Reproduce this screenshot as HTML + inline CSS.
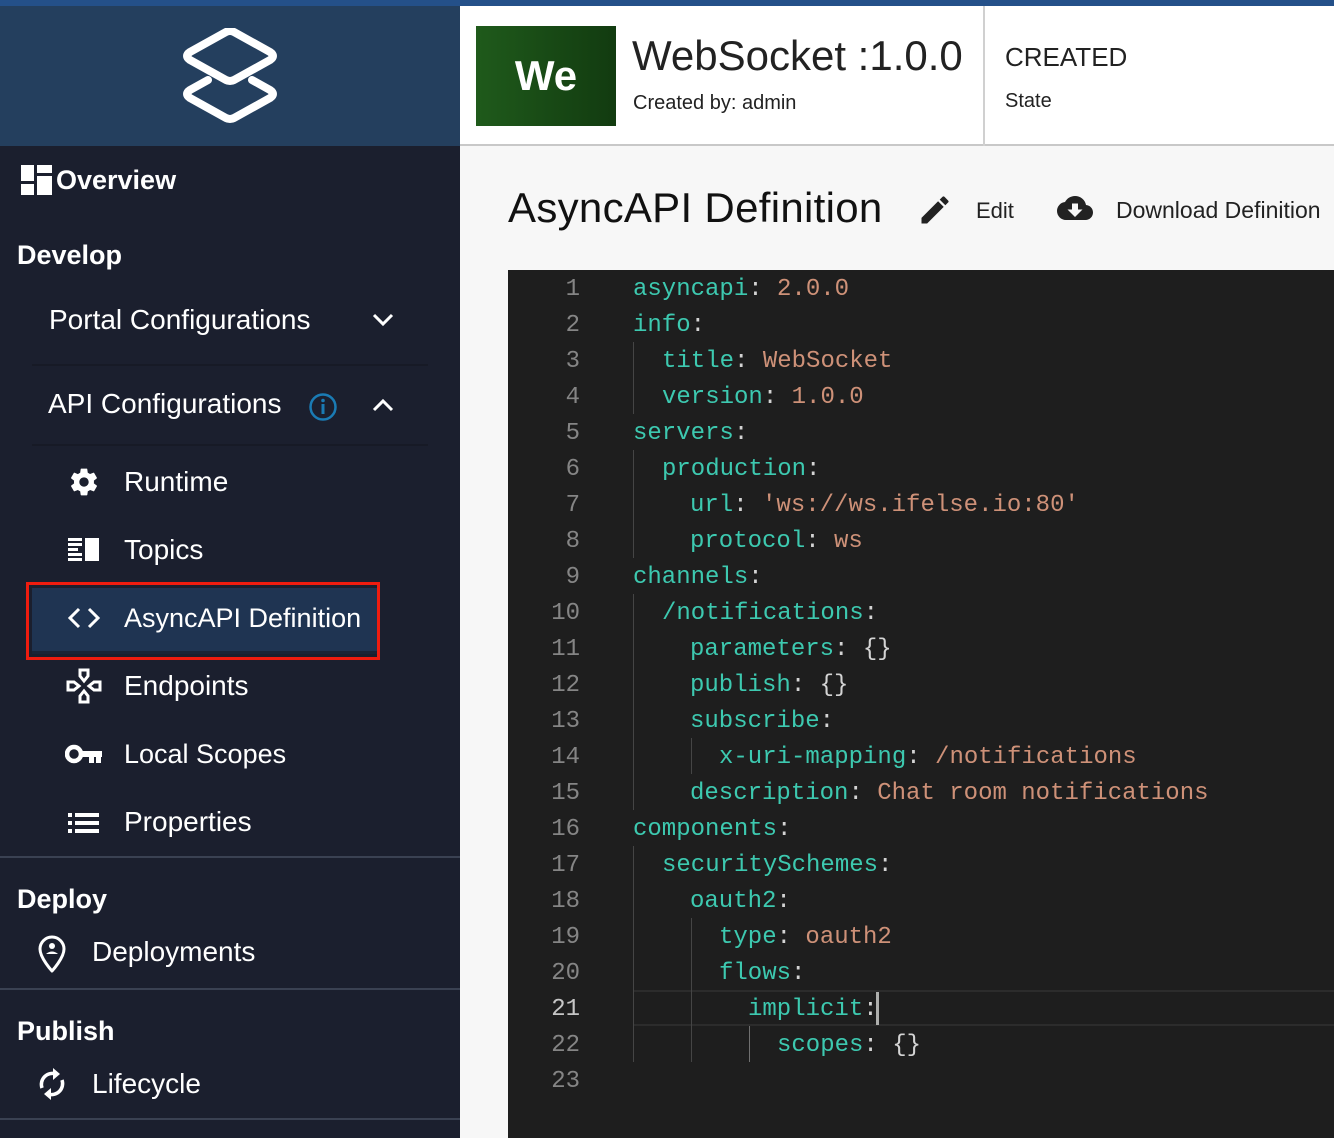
<!DOCTYPE html>
<html><head><meta charset="utf-8"><style>
*{margin:0;padding:0;box-sizing:border-box}
body{width:1334px;height:1138px;overflow:hidden;background:#f7f7f7;font-family:"Liberation Sans","DejaVu Sans",sans-serif;position:relative}
.abs{position:absolute}
#side{left:0;top:0;width:460px;height:1138px;background:#1b1f2e}
#topband{left:0;top:0;width:1334px;height:6px;background:#245089}
#logo{left:0;top:6px;width:460px;height:140px;background:#243f5e}
.w{color:#fff;white-space:nowrap}
.b{font-weight:bold}
.sep{height:2px;background:#3a4152}
#hdr{left:460px;top:6px;width:874px;height:140px;background:#fff;border-bottom:2px solid #c8c8c8}
#code{left:508px;top:270px;width:826px;height:868px;background:#1e1e1e;font-family:"Liberation Mono","DejaVu Sans Mono",monospace;font-size:24px}
.ln{position:absolute;left:0;width:72px;text-align:right;color:#858585;height:36px;line-height:40px}
.cl{position:absolute;height:36px;line-height:40px;white-space:pre;color:#d4d4d4}
.k{color:#3dc9b0}.v{color:#ce9178}
.g{position:absolute;width:1px;height:36px;background:#454545}
</style></head><body>
<div id="side" class="abs"></div>
<div id="logo" class="abs">
<svg class="abs" style="left:182px;top:22px" width="96" height="96" viewBox="0 0 96 96">
<path d="M44 4 L8 24 Q2 28 8 32 L44 52 Q48 54 52 52 L88 32 Q94 28 88 24 L52 4 Q48 2 44 4Z" fill="none" stroke="#fff" stroke-width="8" stroke-linejoin="round"/>
<path d="M26 56 L8 66 Q2 70 8 74 L44 94 Q48 96 52 94 L88 74 Q94 70 88 66 L70 56" fill="none" stroke="#fff" stroke-width="8" stroke-linejoin="round" stroke-linecap="round" transform="translate(0,-4)"/>
</svg></div>
<div id="topband" class="abs"></div>

<svg class="abs" style="left:21px;top:165px" width="31" height="30"><rect x="0" y="0" width="13" height="16" fill="#fff"/><rect x="0" y="19" width="13" height="11" fill="#fff"/><rect x="16" y="0" width="15" height="8" fill="#fff"/><rect x="16" y="11" width="15" height="19" fill="#fff"/></svg>
<div class="abs w b" style="left:56px;top:165px;font-size:27px">Overview</div>
<div class="abs w b" style="left:17px;top:240px;font-size:27px">Develop</div>
<div class="abs w" style="left:49px;top:304px;font-size:28px">Portal Configurations</div>
<svg class="abs" style="left:372px;top:312px" width="22" height="16"><path d="M2 3 L11 12 L20 3" fill="none" stroke="#fff" stroke-width="3"/></svg>
<div class="abs" style="left:32px;top:364px;width:396px;height:2px;background:#171a26"></div>
<div class="abs w" style="left:48px;top:388px;font-size:28px">API Configurations</div>
<svg class="abs" style="left:308px;top:392px" width="30" height="30"><circle cx="15" cy="15" r="12.5" fill="none" stroke="#1a7bb4" stroke-width="2.5"/><rect x="13.5" y="12" width="3" height="10" fill="#1a7bb4"/><circle cx="15" cy="8.5" r="1.8" fill="#1a7bb4"/></svg>
<svg class="abs" style="left:372px;top:397px" width="22" height="16"><path d="M2 13 L11 4 L20 13" fill="none" stroke="#fff" stroke-width="3"/></svg>
<div class="abs" style="left:32px;top:444px;width:396px;height:2px;background:#171a26"></div>

<svg class="abs" style="left:68px;top:466px" width="32" height="32" viewBox="0 0 24 24"><path fill="#fff" d="M19.4 13c.04-.33.06-.66.06-1s-.02-.67-.06-1l2.1-1.65c.2-.15.25-.42.12-.64l-2-3.46c-.12-.22-.39-.3-.61-.22l-2.49 1c-.52-.4-1.08-.73-1.690-.98l-.38-2.650C14.46 2.18 14.25 2 14 2h-4c-.25 0-.46.18-.49.42l-.38 2.65c-.61.25-1.17.59-1.69.98l-2.49-1c-.23-.09-.49 0-.61.22l-2 3.46c-.13.22-.07.49.12.64L4.57 11c-.04.33-.07.67-.07 1s.03.67.07 1l-2.11 1.65c-.19.15-.24.42-.12.64l2 3.46c.12.22.39.3.61.22l2.49-1c.52.4 1.08.73 1.69.98l.38 2.65c.03.24.24.42.49.42h4c.25 0 .46-.18.49-.42l.38-2.65c.61-.25 1.17-.59 1.69-.98l2.49 1c.23.09.49 0 .61-.22l2-3.46c.12-.22.07-.49-.12-.64L19.4 13zM12 15.5c-1.93 0-3.5-1.57-3.5-3.5s1.57-3.5 3.5-3.5 3.5 1.57 3.5 3.5-1.57 3.5-3.5 3.5z"/></svg>
<div class="abs w" style="left:124px;top:466px;font-size:28px">Runtime</div>
<svg class="abs" style="left:68px;top:538px" width="32" height="24"><g fill="#fff"><rect x="0" y="0" width="14" height="3"/><rect x="0" y="5" width="14" height="3"/><rect x="0" y="10" width="10" height="3"/><rect x="0" y="15" width="14" height="3"/><rect x="0" y="20" width="14" height="3"/><rect x="17" y="0" width="14" height="23"/></g></svg>
<div class="abs w" style="left:124px;top:534px;font-size:28px">Topics</div>

<div class="abs" style="left:26px;top:582px;width:354px;height:78px;border:3px solid #ef1c0f;"></div>
<div class="abs" style="left:32px;top:588px;width:345px;height:66px;background:#1f3452;border-bottom:3px solid #1b2436"></div>
<svg class="abs" style="left:66px;top:606px" width="36" height="24"><path d="M13 3 L4 12 L13 21 M23 3 L32 12 L23 21" fill="none" stroke="#fff" stroke-width="3"/></svg>
<div class="abs w" style="left:124px;top:603px;font-size:27px">AsyncAPI Definition</div>

<svg class="abs" style="left:66px;top:668px" width="36" height="36"><g fill="none" stroke="#fff" stroke-width="3"><path d="M14 2 h8 v6 l-4 5 l-4 -5z"/><path d="M14 34 h8 v-6 l-4 -5 l-4 5z"/><path d="M2 14 v8 h6 l5 -4 l-5 -4z"/><path d="M34 14 v8 h-6 l-5 -4 l5 -4z"/></g></svg>
<div class="abs w" style="left:124px;top:670px;font-size:28px">Endpoints</div>
<svg class="abs" style="left:65px;top:742px" width="38" height="24"><circle cx="9" cy="12" r="7" fill="none" stroke="#fff" stroke-width="4.5"/><rect x="15" y="9" width="22" height="6" fill="#fff"/><rect x="24" y="9" width="5" height="12" fill="#fff"/><rect x="31" y="9" width="5" height="12" fill="#fff"/></svg>
<div class="abs w" style="left:124px;top:739px;font-size:27px">Local Scopes</div>
<svg class="abs" style="left:68px;top:812px" width="32" height="22"><g fill="#fff"><rect x="0" y="1" width="4" height="4"/><rect x="0" y="9" width="4" height="4"/><rect x="0" y="17" width="4" height="4"/><rect x="7" y="1" width="24" height="4"/><rect x="7" y="9" width="24" height="4"/><rect x="7" y="17" width="24" height="4"/></g></svg>
<div class="abs w" style="left:124px;top:806px;font-size:28px">Properties</div>

<div class="abs sep" style="left:0;top:856px;width:460px"></div>
<div class="abs w b" style="left:17px;top:884px;font-size:27px">Deploy</div>
<svg class="abs" style="left:36px;top:934px" width="32" height="40"><path d="M16 37 C16 37 4 24 4 15 A12 12 0 0 1 28 15 C28 24 16 37 16 37Z" fill="none" stroke="#fff" stroke-width="3" stroke-linejoin="round"/><circle cx="16" cy="12" r="3" fill="#fff"/><path d="M10 20 Q16 15 22 20z" fill="#fff"/></svg>
<div class="abs w" style="left:92px;top:936px;font-size:28px">Deployments</div>
<div class="abs sep" style="left:0;top:988px;width:460px"></div>
<div class="abs w b" style="left:17px;top:1016px;font-size:27px">Publish</div>
<svg class="abs" style="left:36px;top:1066px" width="32" height="36" viewBox="0 0 32 36"><g fill="none" stroke="#fff" stroke-width="3.5"><path d="M6 22 A11 11 0 0 1 20 8"/><path d="M26 14 A11 11 0 0 1 12 28"/></g><path d="M17 2 L24 8 L17 14z" fill="#fff"/><path d="M15 22 L8 28 L15 34z" fill="#fff"/></svg>
<div class="abs w" style="left:92px;top:1068px;font-size:28px">Lifecycle</div>
<div class="abs sep" style="left:0;top:1118px;width:460px"></div>

<div id="hdr" class="abs"></div>
<div class="abs" style="left:476px;top:26px;width:140px;height:100px;background:linear-gradient(90deg,#1f5a1b,#123b10)"></div>
<div class="abs" style="left:476px;top:52px;width:140px;text-align:center;color:#fff;font-size:42px;font-weight:bold">We</div>
<div class="abs" style="left:632px;top:32px;font-size:42px;color:#222;white-space:nowrap">WebSocket :1.0.0</div>
<div class="abs" style="left:633px;top:92px;font-size:20px;color:#222;white-space:nowrap">Created by: admin</div>
<div class="abs" style="left:983px;top:6px;width:2px;height:140px;background:#d0d0d0"></div>
<div class="abs" style="left:1005px;top:42px;font-size:26px;color:#222">CREATED</div>
<div class="abs" style="left:1005px;top:90px;font-size:20px;color:#222">State</div>

<div class="abs" style="left:508px;top:184px;font-size:42px;color:#111;white-space:nowrap;letter-spacing:0.3px">AsyncAPI Definition</div>
<svg class="abs" style="left:916px;top:192px" width="38" height="36" viewBox="0 0 24 24"><path fill="#222" d="M3 17.25V21h3.75L17.81 9.94l-3.75-3.75L3 17.25zM20.71 7.04a1 1 0 0 0 0-1.41l-2.34-2.34a1 1 0 0 0-1.41 0l-1.83 1.83 3.75 3.75 1.83-1.83z"/></svg>
<div class="abs" style="left:976px;top:198px;font-size:22px;color:#222">Edit</div>
<svg class="abs" style="left:1052px;top:190px" width="46" height="36" viewBox="0 0 24 24"><path fill="#222" d="M19.35 10.04A7.49 7.49 0 0 0 12 4C9.11 4 6.6 5.64 5.35 8.04A5.994 5.994 0 0 0 0 14c0 3.31 2.69 6 6 6h13c2.76 0 5-2.24 5-5 0-2.64-2.05-4.78-4.65-4.96zM17 13l-5 5-5-5h3V9h4v4h3z"/></svg>
<div class="abs" style="left:1116px;top:197px;font-size:23px;color:#222;white-space:nowrap">Download Definition</div>

<div id="code" class="abs">
<div class="abs" style="left:126px;top:720px;width:700px;height:36px;border-top:2px solid #2c2c2c;border-bottom:2px solid #2c2c2c"></div>
<div class="ln" style="top:0">1</div><div class="ln" style="top:36px">2</div><div class="ln" style="top:72px">3</div><div class="ln" style="top:108px">4</div><div class="ln" style="top:144px">5</div><div class="ln" style="top:180px">6</div><div class="ln" style="top:216px">7</div><div class="ln" style="top:252px">8</div><div class="ln" style="top:288px">9</div><div class="ln" style="top:324px">10</div><div class="ln" style="top:360px">11</div><div class="ln" style="top:396px">12</div><div class="ln" style="top:432px">13</div><div class="ln" style="top:468px">14</div><div class="ln" style="top:504px">15</div><div class="ln" style="top:540px">16</div><div class="ln" style="top:576px">17</div><div class="ln" style="top:612px">18</div><div class="ln" style="top:648px">19</div><div class="ln" style="top:684px">20</div><div class="ln" style="top:720px;color:#c6c6c6">21</div><div class="ln" style="top:756px">22</div><div class="ln" style="top:792px">23</div>

<div class="g" style="left:125px;top:72px"></div><div class="g" style="left:125px;top:108px"></div>
<div class="g" style="left:125px;top:180px"></div><div class="g" style="left:125px;top:216px"></div><div class="g" style="left:125px;top:252px"></div>
<div class="g" style="left:125px;top:324px;height:216px"></div>
<div class="g" style="left:183px;top:468px"></div>
<div class="g" style="left:125px;top:576px;height:216px"></div>
<div class="g" style="left:183px;top:648px;height:144px"></div>
<div class="g" style="left:241px;top:756px;background:#707070"></div>

<div class="cl" style="left:125px;top:0"><span class="k">asyncapi</span>: <span class="v">2.0.0</span></div>
<div class="cl" style="left:125px;top:36px"><span class="k">info</span>:</div>
<div class="cl" style="left:154px;top:72px"><span class="k">title</span>: <span class="v">WebSocket</span></div>
<div class="cl" style="left:154px;top:108px"><span class="k">version</span>: <span class="v">1.0.0</span></div>
<div class="cl" style="left:125px;top:144px"><span class="k">servers</span>:</div>
<div class="cl" style="left:154px;top:180px"><span class="k">production</span>:</div>
<div class="cl" style="left:182px;top:216px"><span class="k">url</span>: <span class="v">'ws://ws.ifelse.io:80'</span></div>
<div class="cl" style="left:182px;top:252px"><span class="k">protocol</span>: <span class="v">ws</span></div>
<div class="cl" style="left:125px;top:288px"><span class="k">channels</span>:</div>
<div class="cl" style="left:154px;top:324px"><span class="k">/notifications</span>:</div>
<div class="cl" style="left:182px;top:360px"><span class="k">parameters</span>: {}</div>
<div class="cl" style="left:182px;top:396px"><span class="k">publish</span>: {}</div>
<div class="cl" style="left:182px;top:432px"><span class="k">subscribe</span>:</div>
<div class="cl" style="left:211px;top:468px"><span class="k">x-uri-mapping</span>: <span class="v">/notifications</span></div>
<div class="cl" style="left:182px;top:504px"><span class="k">description</span>: <span class="v">Chat room notifications</span></div>
<div class="cl" style="left:125px;top:540px"><span class="k">components</span>:</div>
<div class="cl" style="left:154px;top:576px"><span class="k">securitySchemes</span>:</div>
<div class="cl" style="left:182px;top:612px"><span class="k">oauth2</span>:</div>
<div class="cl" style="left:211px;top:648px"><span class="k">type</span>: <span class="v">oauth2</span></div>
<div class="cl" style="left:211px;top:684px"><span class="k">flows</span>:</div>
<div class="cl" style="left:240px;top:720px"><span class="k">implicit</span>:</div>
<div class="abs" style="left:368px;top:722px;width:3px;height:33px;background:#aeafad"></div>
<div class="cl" style="left:269px;top:756px"><span class="k">scopes</span>: {}</div>
</div>
</body></html>
